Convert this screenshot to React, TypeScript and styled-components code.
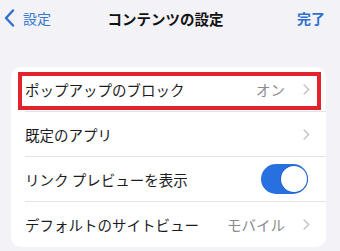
import React, { useState } from "react";
import styled, { createGlobalStyle } from "styled-components";

const GlobalStyle = createGlobalStyle`
  html, body {
    margin: 0;
    padding: 0;
    background: #f2f2f7;
  }
  body {
    width: 340px;
    height: 251px;
    overflow: hidden;
    font-family: "Noto Sans CJK JP", "Noto Sans", sans-serif;
    color: #1c1c1e;
  }
`;

const Page = styled.div`
  width: 340px;
  height: 251px;
  background: #f2f2f7;
  display: flex;
  flex-direction: column;
`;

const NavBar = styled.div`
  height: 36px;
  display: grid;
  grid-template-columns: 1fr auto 1fr;
  align-items: center;
  padding: 0 15px 0 4px;
`;

const BackButton = styled.div`
  display: flex;
  align-items: center;
  gap: 8px;
  color: #3478d4;
  font-size: 14px;
  justify-self: start;
`;

const Title = styled.div`
  font-size: 14.5px;
  font-weight: 700;
  color: #111;
  margin-left: 2px;
`;

const DoneButton = styled.div`
  justify-self: end;
  font-size: 14px;
  font-weight: 700;
  color: #2f6fd0;
`;

const Card = styled.div`
  position: relative;
  margin: 31px 14px 0 11px;
  background: #ffffff;
  border-radius: 10px;
  overflow: hidden;
`;

const Row = styled.div`
  height: 45px;
  padding-left: 14px;
  display: flex;
`;

const RowInner = styled.div<{ $last?: boolean; $toggle?: boolean }>`
  flex: 1;
  display: flex;
  align-items: center;
  padding-right: ${(p) => (p.$toggle ? "18px" : "16px")};
  border-bottom: ${(p) => (p.$last ? "none" : "1px solid #e4e4e8")};
  box-sizing: border-box;
`;

const Label = styled.span`
  flex: 1;
  font-size: 14.5px;
  color: #1c1c1e;
  white-space: nowrap;
`;

const Value = styled.span`
  font-size: 14.5px;
  color: #8a8a8e;
  margin-right: 18px;
`;

const Switch = styled.div<{ $on: boolean }>`
  width: 47px;
  height: 30px;
  border-radius: 15px;
  background: ${(p) => (p.$on ? "#2870df" : "#e9e9eb")};
  display: flex;
  align-items: center;
  justify-content: ${(p) => (p.$on ? "flex-end" : "flex-start")};
  padding: 0 1.5px;
  box-sizing: border-box;
  cursor: pointer;
`;

const Knob = styled.div`
  width: 26px;
  height: 26px;
  border-radius: 50%;
  background: #ffffff;
  box-shadow: 0 0 0 0.8px #1d5fc4;
`;

const Highlight = styled.div`
  position: absolute;
  left: 7px;
  top: 5px;
  width: 303px;
  height: 38px;
  border: 4px solid #e2232c;
  box-sizing: border-box;
  pointer-events: none;
`;

const Chevron = () => (
  <svg width="7" height="11" viewBox="0 0 7 11">
    <path
      d="M1.2 1 L5.6 5.5 L1.2 10"
      fill="none"
      stroke="#c5c5c9"
      strokeWidth="1.6"
      strokeLinecap="round"
      strokeLinejoin="round"
    />
  </svg>
);

const BackChevron = () => (
  <svg width="11" height="18" viewBox="0 0 11 18">
    <path
      d="M9 1.5 L2 9 L9 16.5"
      fill="none"
      stroke="#2f6fd0"
      strokeWidth="2.4"
      strokeLinecap="round"
      strokeLinejoin="round"
    />
  </svg>
);

export default function App() {
  const [preview, setPreview] = useState(true);
  return (
    <>
      <GlobalStyle />
      <Page>
        <NavBar>
          <BackButton>
            <BackChevron />
            <span>設定</span>
          </BackButton>
          <Title>コンテンツの設定</Title>
          <DoneButton>完了</DoneButton>
        </NavBar>
        <Card>
          <Row>
            <RowInner>
              <Label>ポップアップのブロック</Label>
              <Value>オン</Value>
              <Chevron />
            </RowInner>
          </Row>
          <Row>
            <RowInner>
              <Label>既定のアプリ</Label>
              <Chevron />
            </RowInner>
          </Row>
          <Row>
            <RowInner $toggle>
              <Label>リンク プレビューを表示</Label>
              <Switch $on={preview} onClick={() => setPreview(!preview)}>
                <Knob />
              </Switch>
            </RowInner>
          </Row>
          <Row>
            <RowInner $last>
              <Label>デフォルトのサイトビュー</Label>
              <Value>モバイル</Value>
              <Chevron />
            </RowInner>
          </Row>
          <Highlight />
        </Card>
      </Page>
    </>
  );
}
